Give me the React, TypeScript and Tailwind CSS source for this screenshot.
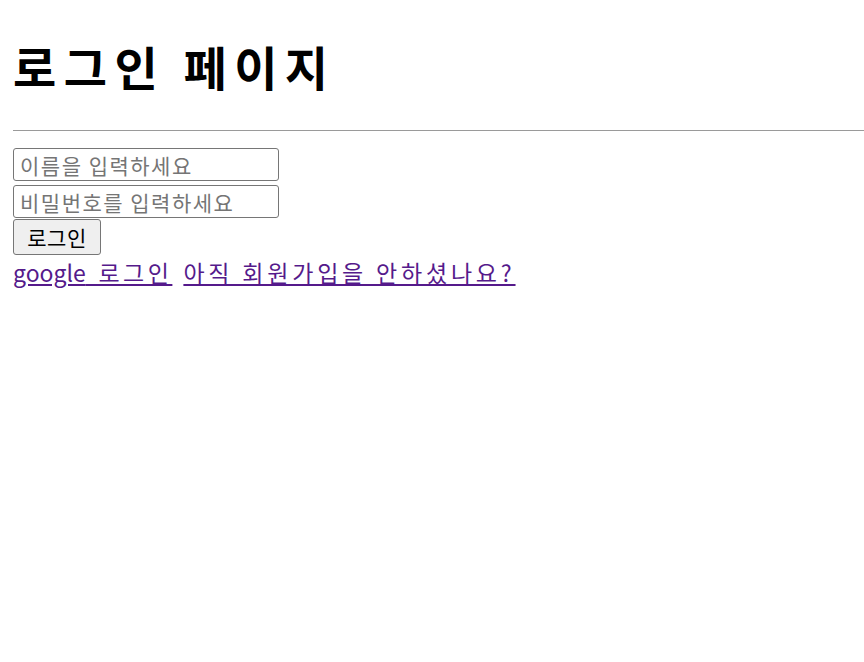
export default function App() {
  const font = { fontFamily: '"Noto Sans CJK KR", "Noto Sans", sans-serif' };
  return (
    <div className="min-h-[662px] bg-white pl-[13px] text-black" style={font}>
      <h1 className="pt-[35px] text-[47px] font-bold leading-[62px] tracking-[7.5px]">로그인 페이지</h1>
      <hr className="mt-[33px] w-[851px] border-t border-[#9a9a9a]" />
      <div className="mt-[17px] flex flex-col items-start">
        <input
          type="text"
          placeholder="이름을 입력하세요"
          className="h-[33px] w-[266px] rounded-[3px] border border-[#767676] px-[6px] text-[21px] leading-[28px] tracking-[1.5px] placeholder:text-[#757575]"
        />
        <input
          type="password"
          placeholder="비밀번호를 입력하세요"
          className="mt-[4px] h-[33px] w-[266px] rounded-[3px] border border-[#767676] px-[6px] text-[21px] leading-[28px] tracking-[1.5px] placeholder:text-[#757575]"
        />
        <button className="mt-[1px] h-[36px] w-[88px] rounded-[3px] border border-[#767676] bg-[#efefef] text-[21px] leading-[28px] tracking-[0.5px]">
          로그인
        </button>
        <div className="flex h-[34px] items-center gap-[11px] text-[23px] leading-[30px]">
          <a href="#" className="text-[#551a8b] underline">
            <span className="tracking-[0px]">google</span>
            <span className="tracking-[3.5px] [word-spacing:4px]"> 로그인</span>
          </a>
          <a href="#" className="tracking-[3.8px] text-[#551a8b] underline">아직 회원가입을 안하셨나요?</a>
        </div>
      </div>
    </div>
  );
}
